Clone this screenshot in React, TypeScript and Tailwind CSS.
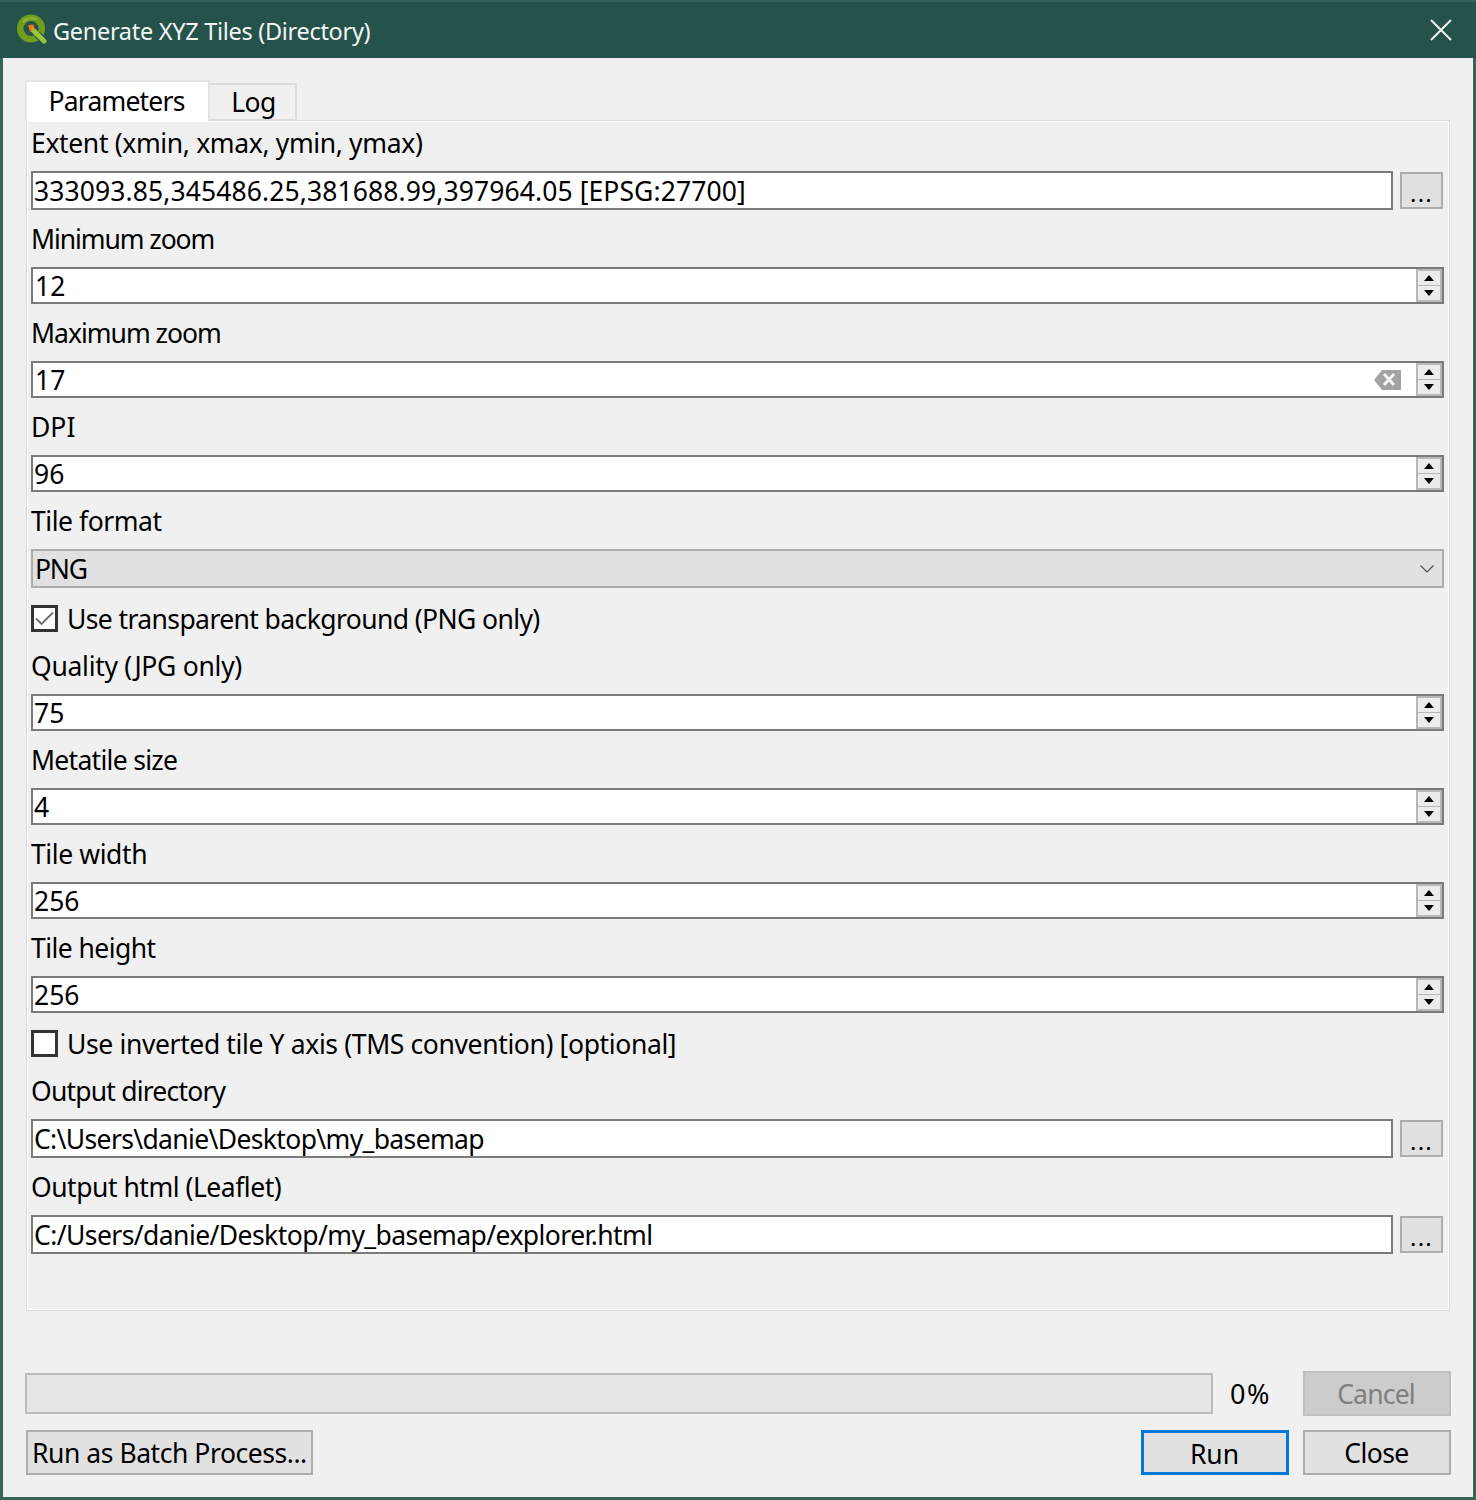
import React from 'react';

const font = "[font-family:'Noto_Sans','Open_Sans',sans-serif]";

function QgisLogo() {
  return (
    <svg width="32" height="32" viewBox="0 0 32 32" className="shrink-0">
      <circle cx="16" cy="14.5" r="10.75" fill="none" stroke="#6f9e1f" strokeWidth="6.5" />
      <path d="M8 8 A11.5 11.5 0 0 1 22 5.5" fill="none" stroke="#8db52f" strokeWidth="2.5" />
      <path d="M22 20 L31 29" stroke="#25524a" strokeWidth="7" />
      <path d="M18 16 L29 27" stroke="#9cc43d" strokeWidth="5" strokeLinecap="round" />
      <path d="M13 11 L18.5 10.5 L19.5 15 L15 18 Z" fill="#ee7913" />
      <path d="M17 12 L19.5 15 L16.5 17 Z" fill="#d6a02a" />
    </svg>
  );
}

function CloseX() {
  return (
    <svg width="22" height="22" viewBox="0 0 22 22">
      <path d="M1 1 L21 21 M21 1 L1 21" stroke="#f2f5f4" strokeWidth="2" />
    </svg>
  );
}

function SpinButtons() {
  return (
    <div className="flex flex-col w-[26px] h-[33px] shrink-0 border-2 border-[#b8b8b8] bg-[#ececec]">
      <div className="flex-1 flex items-center justify-center border-b border-[#b8b8b8]">
        <div className="w-0 h-0 border-x-[5px] border-x-transparent border-b-[6px] border-b-black" />
      </div>
      <div className="flex-1 flex items-center justify-center">
        <div className="w-0 h-0 border-x-[5px] border-x-transparent border-t-[6px] border-t-black" />
      </div>
    </div>
  );
}

function ClearIcon() {
  return (
    <svg width="28" height="20" viewBox="0 0 28 20" className="shrink-0 mr-[14px]">
      <path d="M0 10 L8 0 H27 V20 H8 Z" fill="#a3a3a3" />
      <path d="M10 4 L20 15 M20 4 L10 15" stroke="#f4f4f4" strokeWidth="3" />
    </svg>
  );
}

function FieldLabel({ text, h = 'h-[57px] pt-[2px]', tracking }: { text: string; h?: string; tracking: string }) {
  return (
    <div className={`${h} ${tracking} flex items-center pl-[3px] text-[26.5px] text-black whitespace-nowrap`}>
      {text}
    </div>
  );
}

function SpinField({ value, clear, indent = 'pl-[1px]' }: { value: string; clear?: boolean; indent?: string }) {
  return (
    <div className="ml-[3px] mr-[4px] h-[37px] flex items-center bg-white border-2 border-[#7a7a7a]">
      <span className={`flex-1 ${indent} pt-[2px] text-[26.5px] leading-none text-black`}>{value}</span>
      {clear && <ClearIcon />}
      <SpinButtons />
    </div>
  );
}

function PathField({ value, tracking }: { value: string; tracking: string }) {
  return (
    <div className="ml-[3px] mr-[5px] flex items-center">
      <div className={`flex-1 h-[39px] flex items-center pl-[1px] pt-[2px] bg-white border-2 border-[#7a7a7a] text-[26.5px] leading-none text-black whitespace-nowrap ${tracking}`}>
        {value}
      </div>
      <button className="ml-[7px] w-[43px] h-[37px] bg-[#e1e1e1] border-2 border-[#adadad] text-[24px] leading-none tracking-[1.2px] text-black flex items-end justify-center pb-[2px]">
        ...
      </button>
    </div>
  );
}

function Check({ label, checked, mt, tracking }: { label: string; checked?: boolean; mt: string; tracking: string }) {
  return (
    <div className={`${mt} ml-[3px] h-[27px] flex items-center`}>
      <div className="w-[27px] h-[27px] flex items-center justify-center bg-white border-[3px] border-[#333333]">
        {checked && (
          <svg width="19" height="15" viewBox="0 0 19 15">
            <path d="M1 7.5 L6.5 13 L18 1.5" fill="none" stroke="#6b6b6b" strokeWidth="1.8" />
          </svg>
        )}
      </div>
      <span className={`ml-[9px] pt-[2px] text-[26.5px] text-black whitespace-nowrap ${tracking}`}>{label}</span>
    </div>
  );
}

export default function App() {
  return (
    <div className={`w-[1476px] h-[1500px] flex flex-col bg-[#f0f0f0] border-x-[3px] border-b-[3px] border-[#376459] ${font}`}>
      {/* title bar */}
      <div className="h-[58px] -mx-[3px] flex items-center pl-[15px] pr-[24px] bg-[#25524a] border-t-2 border-[#376459]">
        <QgisLogo />
        <span className="ml-[6px] pt-[3px] flex-1 text-[23.5px] tracking-[-0.3px] text-[#f2f5f4]">Generate XYZ Tiles (Directory)</span>
        <CloseX />
      </div>

      <div className="flex-1 flex flex-col pl-[22px] pr-[22px]">
        {/* tabs */}
        <div className="mt-[22px] h-[41px] flex items-end relative z-10 -mb-[1px]">
          <div className="w-[185px] h-[41px] pt-[1px] pr-[2px] flex items-center justify-center bg-white border-2 border-b-0 border-[#e4e4e4] text-[26.5px] tracking-[-0.8px] text-black">
            Parameters
          </div>
          <div className="w-[87px] h-[38px] pt-[1px] pl-[2px] flex items-center justify-center border-2 border-l-0 border-[#dcdcdc] text-[26.5px] tracking-[-0.6px] text-black">
            Log
          </div>
        </div>

        {/* parameters pane */}
        <div className="ml-[1px] mr-[1px] h-[1191px] border border-[#d9d9d9]">
          <div className="h-full border border-white">
            <FieldLabel text="Extent (xmin, xmax, ymin, ymax)" h="h-[49px] pb-[6px]" tracking="tracking-[-0.35px]" />
            <PathField value="333093.85,345486.25,381688.99,397964.05 [EPSG:27700]" tracking="tracking-[0.1px]" />
            <FieldLabel text="Minimum zoom" tracking="tracking-[-1.08px]" />
            <SpinField value="12" indent="pl-[2px]" />
            <FieldLabel text="Maximum zoom" tracking="tracking-[-1px]" />
            <SpinField value="17" clear indent="pl-[2px]" />
            <FieldLabel text="DPI" tracking="tracking-normal" />
            <SpinField value="96" />
            <FieldLabel text="Tile format" tracking="tracking-[-0.45px]" />
            <div className="ml-[3px] mr-[4px] h-[39px] flex items-center justify-between pl-[2px] pr-[8px] bg-[#e1e1e1] border-2 border-[#adadad] text-[26.5px] tracking-[-1.2px] text-black">
              <span className="pt-[2px]">PNG</span>
              <svg width="14" height="8" viewBox="0 0 14 8">
                <path d="M0.5 0.5 L7 7 L13.5 0.5" fill="none" stroke="#4d4d4d" strokeWidth="1.2" />
              </svg>
            </div>
            <Check label="Use transparent background (PNG only)" checked mt="mt-[17px]" tracking="tracking-[-0.6px]" />
            <FieldLabel text="Quality (JPG only)" h="h-[62px] pt-[8px]" tracking="tracking-[-0.28px]" />
            <SpinField value="75" />
            <FieldLabel text="Metatile size" tracking="tracking-[-0.7px]" />
            <SpinField value="4" />
            <FieldLabel text="Tile width" tracking="tracking-[-0.4px]" />
            <SpinField value="256" />
            <FieldLabel text="Tile height" tracking="tracking-[-0.55px]" />
            <SpinField value="256" />
            <Check label="Use inverted tile Y axis (TMS convention) [optional]" mt="mt-[17px]" tracking="tracking-[-0.37px]" />
            <FieldLabel text="Output directory" h="h-[62px] pt-[8px]" tracking="tracking-[-0.8px]" />
            <PathField value="C:\Users\danie\Desktop\my_basemap" tracking="tracking-[-0.64px]" />
            <FieldLabel text="Output html (Leaflet)" tracking="tracking-[-0.48px]" />
            <PathField value="C:/Users/danie/Desktop/my_basemap/explorer.html" tracking="tracking-[-0.57px]" />
          </div>
        </div>

        {/* progress row */}
        <div className="mt-[60px] flex items-center">
          <div className="w-[1188px] h-[41px] bg-[#e6e6e6] border-2 border-[#bcbcbc]" />
          <span className="w-[90px] pl-[17px] pt-[2px] text-[27px] tracking-[1.5px] text-black">0%</span>
          <button className="w-[148px] h-[45px] pt-[2px] pr-[2px] bg-[#cccccc] border-2 border-[#bfbfbf] text-[26.5px] tracking-[-0.8px] text-[#7f7f7f]">
            Cancel
          </button>
        </div>

        {/* button row */}
        <div className="mt-[14px] flex items-center">
          <button className="ml-[1px] w-[287px] h-[45px] pl-[4px] pt-[2px] text-left bg-[#e1e1e1] border-2 border-[#adadad] text-[26.5px] tracking-[-0.45px] text-black whitespace-nowrap">
            Run as Batch Process...
          </button>
          <div className="flex-1" />
          <button className="w-[148px] h-[45px] pt-[2px] pr-[1px] bg-[#e1e1e1] border-[3px] border-[#0078d7] text-[26.5px] text-black">
            Run
          </button>
          <button className="ml-[14px] w-[148px] h-[45px] pt-[2px] pr-[1px] bg-[#e1e1e1] border-2 border-[#adadad] text-[26.5px] tracking-[-0.6px] text-black">
            Close
          </button>
        </div>
      </div>
    </div>
  );
}
